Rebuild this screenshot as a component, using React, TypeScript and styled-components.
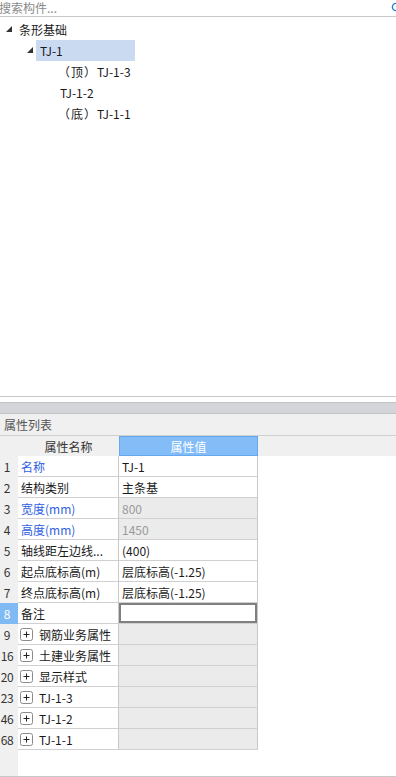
import React from "react";
import styled, { createGlobalStyle } from "styled-components";

const Global = createGlobalStyle`
    body {
        margin: 0;
        background: #ffffff;
        font-family: "Noto Sans CJK SC", "Noto Sans", sans-serif;
        font-size: 12px;
        color: #1a1a1a;
    }
`;

const Page = styled.div`
    width: 396px;
    height: 777px;
    display: flex;
    flex-direction: column;
    overflow: hidden;
`;
const SearchBar = styled.div`
    height: 16px;
    border-bottom: 1px solid #c8c8c8;
    display: flex;
    align-items: center;
    justify-content: space-between;
    overflow: hidden;
    flex-shrink: 0;
`;
const SearchText = styled.span`
    color: #8a8a8a;
    line-height: 16px;
    margin-left: -1px;
`;
const SearchIcon = styled.svg`
    width: 12px;
    height: 12px;
    margin-right: -7px;
    margin-top: -1px;
`;
const Tree = styled.div`
    flex: 1;
    padding-top: 2px;
`;
const TreeRow = styled.div<{ $indent: number }>`
    height: 21px;
    display: flex;
    align-items: center;
    padding-left: ${(p) => p.$indent}px;
`;
const Arrow = styled.svg`
    width: 6px;
    height: 6px;
    margin-right: 3px;
    margin-top: -1px;
`;
const Label = styled.span<{ $selected?: boolean }>`
    height: 21px;
    line-height: 21px;
    padding-left: 4px;
    width: ${(p) => (p.$selected ? "95px" : "auto")};
    background: ${(p) => (p.$selected ? "#c9daf1" : "transparent")};
`;
const Paren = styled.span`
    letter-spacing: 1px;
`;
const Lower = styled.div`
    height: 380px;
    border-top: 1px solid #c8c8c8;
    display: flex;
    flex-direction: column;
    flex-shrink: 0;
`;
const Band = styled.div`
    margin-top: 5px;
    height: 10px;
    background: #d4d5da;
    border-top: 1px solid #c2c3c7;
    border-bottom: 1px solid #c2c3c7;
`;
const PanelTitle = styled.div`
    height: 21px;
    line-height: 21px;
    padding-left: 4px;
    background: #f0f0f0;
    color: #555555;
    border-bottom: 1px solid #d0d0d0;
`;
const Table = styled.div`
    flex: 1;
    display: flex;
    flex-direction: column;
    border-bottom: 1px solid #c8c8c8;
    background: linear-gradient(to right, #f0f0f0 18px, #ffffff 18px);
`;
const HeaderRow = styled.div`
    display: grid;
    grid-template-columns: 18px 101px 139px;
    height: 20px;
    background: #f0f0f0;
`;
const HeadCell = styled.div<{ $active?: boolean }>`
    display: flex;
    align-items: center;
    justify-content: center;
    color: ${(p) => (p.$active ? "#ffffff" : "#333333")};
    background: ${(p) => (p.$active ? "#83bcf7" : "transparent")};
    border: ${(p) => (p.$active ? "1px solid #64a8ef" : "none")};
    box-sizing: border-box;
`;
const Row = styled.div`
    display: grid;
    grid-template-columns: 18px 101px 139px;
    height: 21px;
`;
const NumCell = styled.div<{ $active?: boolean }>`
    background: ${(p) => (p.$active ? "#7fbaf5" : "#f0f0f0")};
    color: ${(p) => (p.$active ? "#ffffff" : "#333333")};
    display: flex;
    align-items: center;
    justify-content: center;
    padding-right: 4px;
    border-bottom: 1px solid ${(p) => (p.$active ? "#7fbaf5" : "#f0f0f0")};
    box-sizing: border-box;
    font-size: 12px;
    letter-spacing: -0.3px;
`;
const NameCell = styled.div<{ $blue?: boolean }>`
    display: flex;
    align-items: center;
    padding-left: 3px;
    background: #ffffff;
    color: ${(p) => (p.$blue ? "#2f5fe3" : "#1a1a1a")};
    border-right: 1px solid #c8c8c8;
    border-bottom: 1px solid #d0d0d0;
    box-sizing: border-box;
    white-space: nowrap;
    overflow: hidden;
`;
const ValueCell = styled.div<{ $gray?: boolean; $focus?: boolean }>`
    display: flex;
    align-items: center;
    padding-left: 3px;
    background: ${(p) => (p.$gray ? "#ebebeb" : "#ffffff")};
    color: ${(p) => (p.$gray ? "#9a9a9a" : "#1a1a1a")};
    border-right: 1px solid #c8c8c8;
    border-bottom: 1px solid #d0d0d0;
    box-sizing: border-box;
    ${(p) => (p.$focus ? "box-shadow: inset 0 0 0 2px #808080;" : "")}
`;
const PlusBox = styled.svg`
    width: 13px;
    height: 13px;
    margin-left: -1px;
    margin-right: 6px;
    flex-shrink: 0;
`;

const TriangleIcon = () => (
    <Arrow viewBox="0 0 6 6">
        <polygon points="6,0 6,6 0,6" fill="#333333" />
    </Arrow>
);

const Plus = () => (
    <PlusBox viewBox="0 0 13 13">
        <rect x="0.5" y="0.5" width="12" height="12" rx="2" fill="#ffffff" stroke="#8a8a8a" />
        <path d="M3.5 6.5h6M6.5 3.5v6" stroke="#222222" strokeWidth="1" />
    </PlusBox>
);

interface IProp {
    no: string;
    name: string;
    value?: string;
    blue?: boolean;
    gray?: boolean;
    group?: boolean;
    focus?: boolean;
}

const props: IProp[] = [
    { no: "1", name: "名称", value: "TJ-1", blue: true },
    { no: "2", name: "结构类别", value: "主条基" },
    { no: "3", name: "宽度(mm)", value: "800", blue: true, gray: true },
    { no: "4", name: "高度(mm)", value: "1450", blue: true, gray: true },
    { no: "5", name: "轴线距左边线...", value: "(400)" },
    { no: "6", name: "起点底标高(m)", value: "层底标高(-1.25)" },
    { no: "7", name: "终点底标高(m)", value: "层底标高(-1.25)" },
    { no: "8", name: "备注", value: "", focus: true },
    { no: "9", name: "钢筋业务属性", group: true, gray: true },
    { no: "16", name: "土建业务属性", group: true, gray: true },
    { no: "20", name: "显示样式", group: true, gray: true },
    { no: "23", name: "TJ-1-3", group: true, gray: true },
    { no: "46", name: "TJ-1-2", group: true, gray: true },
    { no: "68", name: "TJ-1-1", group: true, gray: true },
];

export default function App() {
    return (
        <Page>
            <Global />
            <SearchBar>
                <SearchText>搜索构件...</SearchText>
                <SearchIcon viewBox="0 0 12 12">
                    <circle cx="5" cy="5" r="3.6" fill="none" stroke="#1f7fd1" strokeWidth="1.4" />
                    <path d="M7.6 7.6L11 11" stroke="#1f7fd1" strokeWidth="1.4" />
                </SearchIcon>
            </SearchBar>
            <Tree>
                <TreeRow $indent={6}>
                    <TriangleIcon />
                    <Label>条形基础</Label>
                </TreeRow>
                <TreeRow $indent={27}>
                    <TriangleIcon />
                    <Label $selected>TJ-1</Label>
                </TreeRow>
                <TreeRow $indent={54}>
                    <Label>
                        <Paren>（顶）</Paren>TJ-1-3
                    </Label>
                </TreeRow>
                <TreeRow $indent={56}>
                    <Label>TJ-1-2</Label>
                </TreeRow>
                <TreeRow $indent={54}>
                    <Label>
                        <Paren>（底）</Paren>TJ-1-1
                    </Label>
                </TreeRow>
            </Tree>
            <Lower>
                <Band />
                <PanelTitle>属性列表</PanelTitle>
                <Table>
                    <HeaderRow>
                        <HeadCell />
                        <HeadCell>属性名称</HeadCell>
                        <HeadCell $active>属性值</HeadCell>
                    </HeaderRow>
                    {props.map((p) => (
                        <Row key={p.no}>
                            <NumCell $active={p.focus}>{p.no}</NumCell>
                            <NameCell $blue={p.blue}>
                                {p.group && <Plus />}
                                {p.name}
                            </NameCell>
                            <ValueCell $gray={p.gray} $focus={p.focus}>
                                {p.value}
                            </ValueCell>
                        </Row>
                    ))}
                </Table>
            </Lower>
        </Page>
    );
}
